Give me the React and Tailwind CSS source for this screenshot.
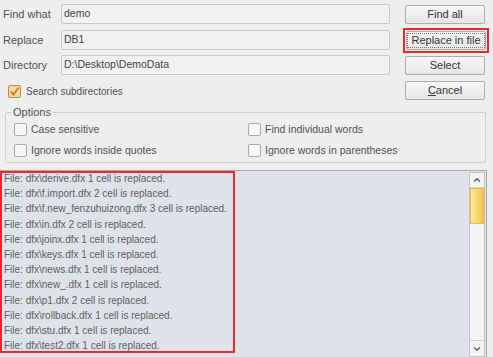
import { ChevronUp, ChevronDown } from "lucide-react";

const lines = [
	"File: dfx\\derive.dfx 1 cell is replaced.",
	"File: dfx\\f.import.dfx 2 cell is replaced.",
	"File: dfx\\f.new_fenzuhuizong.dfx 3 cell is replaced.",
	"File: dfx\\in.dfx 2 cell is replaced.",
	"File: dfx\\joinx.dfx 1 cell is replaced.",
	"File: dfx\\keys.dfx 1 cell is replaced.",
	"File: dfx\\news.dfx 1 cell is replaced.",
	"File: dfx\\new_.dfx 1 cell is replaced.",
	"File: dfx\\p1.dfx 2 cell is replaced.",
	"File: dfx\\rollback.dfx 1 cell is replaced.",
	"File: dfx\\stu.dfx 1 cell is replaced.",
	"File: dfx\\test2.dfx 1 cell is replaced.",
];

function Box({ checked }) {
	return (
		<span
			className={`w-[13px] h-[13px] shrink-0 rounded-[2px] border flex items-center justify-center ${
				checked ? "border-[#b98a4a] bg-[#f3d9a8]" : "border-[#a8a8a8] bg-[#f7f7f7]"
			}`}>
			{checked && (
				<svg width="11" height="11" viewBox="0 0 11 11">
					<path d="M2 5.5 L4.5 8.5 L9.5 1.5" fill="none" stroke="#e07b12" strokeWidth="2" />
				</svg>
			)}
		</span>
	);
}

function Field({ value }) {
	return (
		<div className="w-[329px] h-[20px] border border-[#c9c9c9] rounded-[2px] bg-[#f1f1f1] flex items-center pl-[2px] text-[10.5px] text-[#444]">
			{value}
		</div>
	);
}

function Btn({ children, focused }) {
	return (
		<div className="w-[80px] h-[19px] border border-[#adadad] rounded-[2px] bg-gradient-to-b from-[#f8f8f8] to-[#e6e6e6] flex items-center justify-center text-[#333]">
			{focused ? (
				<span className="border border-dotted border-[#777] px-[3px] leading-[13px]">{children}</span>
			) : (
				children
			)}
		</div>
	);
}

export default function App() {
	return (
		<div className="w-[493px] h-[357px] bg-[#eeeeee] overflow-hidden font-['Liberation_Sans',Arial,sans-serif] text-[11px] text-[#505050]">
			{/* rows */}
			<div className="flex items-center h-[20px] mt-[4px]">
				<span className="w-[61px] pl-[3px]">Find what</span>
				<Field value="demo" />
				<div className="ml-[15px]"><Btn>Find all</Btn></div>
			</div>
			<div className="flex items-center h-[20px] mt-[6px]">
				<span className="w-[61px] pl-[3px]">Replace</span>
				<Field value="DB1" />
				<div className="ml-[13px] border-2 border-[#e8262b] p-[1px]">
					<Btn focused>Replace in file</Btn>
				</div>
			</div>
			<div className="flex items-center h-[20px] mt-[5px]">
				<span className="w-[61px] pl-[3px]">Directory</span>
				<Field value="D:\Desktop\DemoData" />
				<div className="ml-[15px]"><Btn>Select</Btn></div>
			</div>
			<div className="flex items-center h-[20px] mt-[5px]">
				<div className="w-[405px] flex items-center gap-[5px] pl-[8px] pt-[2px] text-[10px]">
					<Box checked />
					<span>Search subdirectories</span>
				</div>
				<Btn>
					<span><span className="underline">C</span>ancel</span>
				</Btn>
			</div>

			{/* options group */}
			<div className="ml-[5px] mt-[12px] w-[481px] h-[51px] border border-[#cfcfcf] rounded-[2px] relative">
				<span className="absolute left-[5px] -top-[8px] px-[2px] bg-[#eeeeee] leading-[14px]">Options</span>
				<div className="grid grid-cols-[234px_1fr] pl-[8px] pt-[10px] gap-y-[8px] text-[10.5px] leading-[13px]">
					<div className="flex items-center gap-[4px]"><Box /><span>Case sensitive</span></div>
					<div className="flex items-center gap-[4px]"><Box /><span>Find individual words</span></div>
					<div className="flex items-center gap-[4px]"><Box /><span>Ignore words inside quotes</span></div>
					<div className="flex items-center gap-[4px]"><Box /><span>Ignore words in parentheses</span></div>
				</div>
			</div>

			{/* log area */}
			<div className="mt-[7px] w-[487px] h-[190px] border-t border-r border-[#a9a9a9] bg-[#dfe2e9] flex">
				<div className="flex-1">
					<div className="w-[235px] h-[182px] border-2 border-[#e8262b] pl-[2px] text-[10px] text-[#5e5e5e]">
						<div className="-mt-[2px]">
							{lines.map((l) => (
								<div key={l} className="h-[15.2px] leading-[15px] whitespace-nowrap">{l}</div>
							))}
						</div>
					</div>
				</div>
				<div className="w-[16px] mr-[1px] mt-[1px] h-[185px] border border-[#c3c3c3] bg-[#f4f4f4] flex flex-col">
					<div className="h-[15px] flex items-center justify-center border-b border-[#d0d0d0]">
						<ChevronUp size={10} strokeWidth={3} color="#555" />
					</div>
					<div className="h-[36px] bg-gradient-to-r from-[#fde9a0] via-[#fbd572] to-[#f6c451] border border-[#e8b94a]" />
					<div className="flex-1" />
					<div className="h-[16px] flex items-center justify-center border-t border-[#d0d0d0]">
						<ChevronDown size={10} strokeWidth={3} color="#555" />
					</div>
				</div>
			</div>
		</div>
	);
}
